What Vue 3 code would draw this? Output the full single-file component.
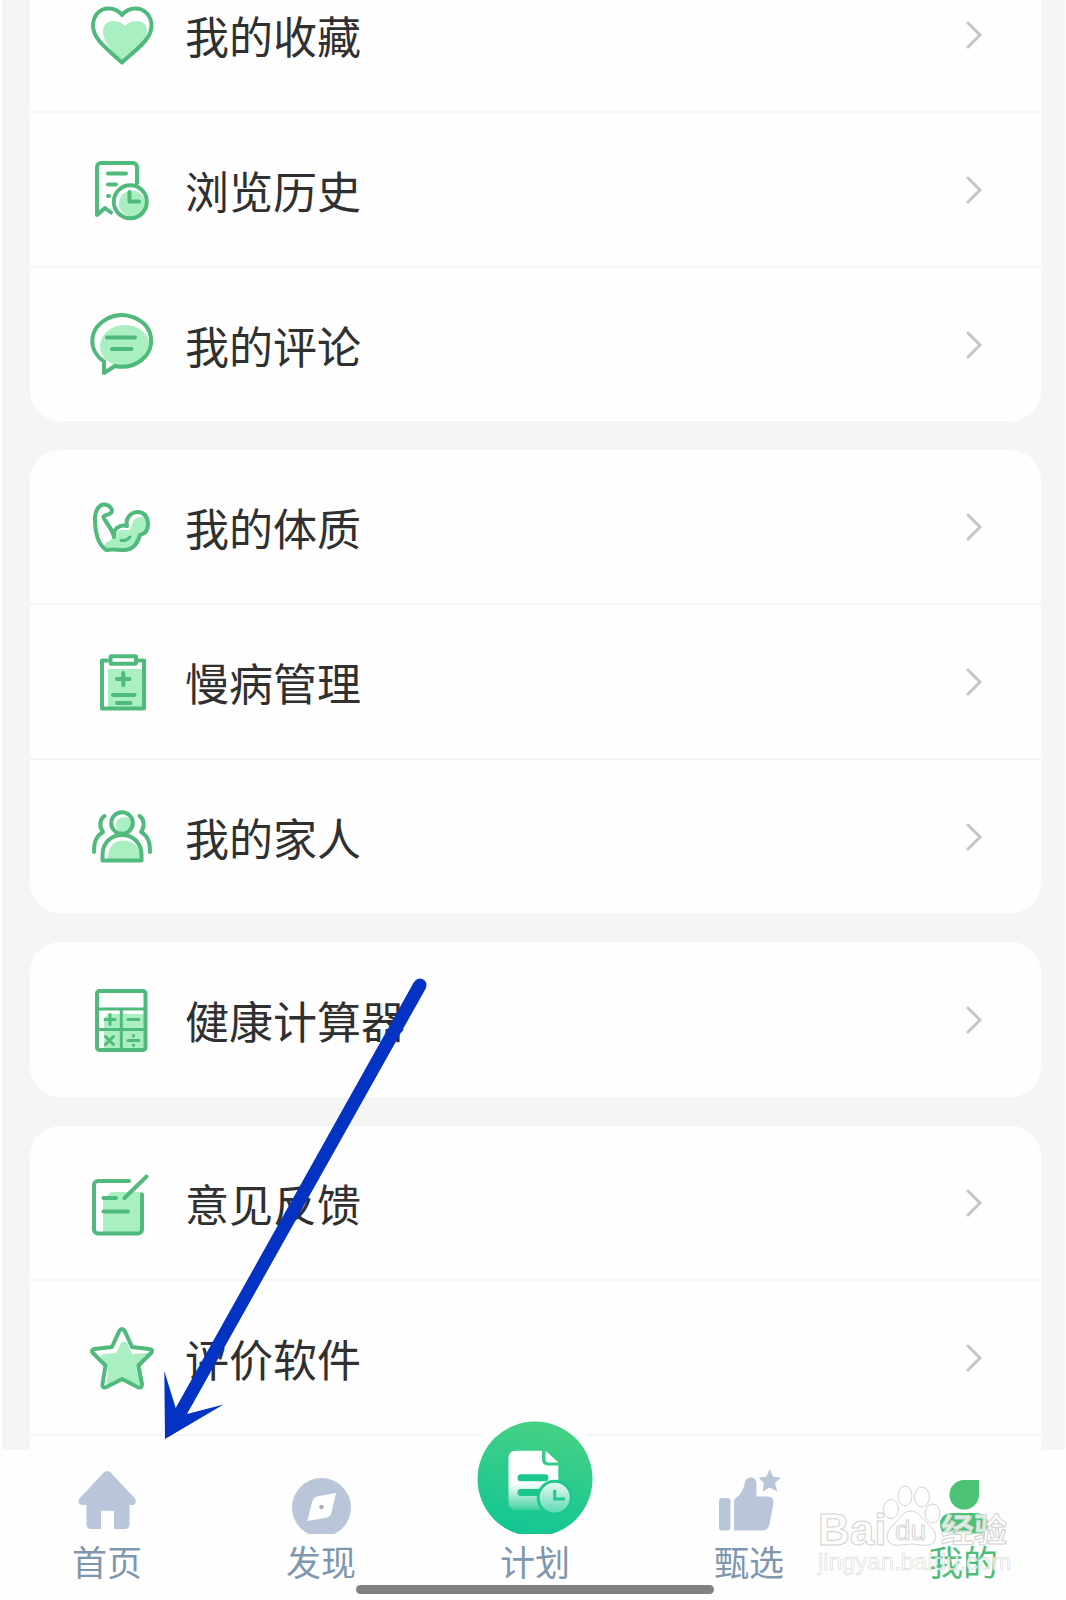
<template>
  <div class="page">
    <main class="menu">
      <section
        v-for="(group, index) in groups"
        :key="index"
        :class="['card', { 'card--open': index === groups.length - 1 }]"
      >
        <a v-for="item in group" :key="item.icon" class="row" href="#">
          <svg class="row__icon" viewBox="0 0 72 72" aria-hidden="true">
            <template v-if="item.icon === 'heart'">
              <path class="tint" d="M39 27C35 23 31 22 27 22C20 22 17 27 17 33C17 43 26 52 36 62C47 52 61 43 61 32C61 26 57 22 51 22C47 22 43 23 39 27Z" />
              <path class="line" d="M36 16C32 11 27 9.5 22.5 9.5C13 9.5 7 17 7 27C7 41 24 52 36 63.5C48 52 65.5 41 65.5 27C65.5 17 59 9.5 49.5 9.5C45 9.5 40 11 36 16Z" />
            </template>
            <template v-else-if="item.icon === 'history'">
              <path class="line" d="M51 29V13a4 4 0 0 0-4-4H15a4 4 0 0 0-4 4V61L19 54L25 58.5" />
              <path class="line" d="M22 19.5H40M22 30.5H30M22 42H23" />
              <circle class="tint" cx="46" cy="49.5" r="13" />
              <circle class="line" cx="44.3" cy="47.8" r="16.5" />
              <path class="line" d="M43.5 38V47.5H53" />
            </template>
            <template v-else-if="item.icon === 'comment'">
              <ellipse class="tint" cx="39" cy="37" rx="25" ry="21" />
              <path class="line" d="M18 52.5A29.5 25.7 0 1 1 29 57L18 64Z" />
              <path class="line" d="M21 28.5H49M26 40H45.5" />
            </template>
            <template v-else-if="item.icon === 'body'">
              <path class="tint" d="M18 58C17 50 27 50 30 43C33 38 38 39 43 39C48 35 45 27 54 26C60 24 63 30 62 35C61 41 58 42 54 43C52 52 47 58 38 58Z" />
              <path class="line" d="M20 59C12 53 9 42 9 28C9 18 14 13.5 18 13.5C23 13.5 27 18 25.5 21C24 24.5 20 23 17.5 25.5C17 29 26 36 28 46C27 38 33 33 41 35C39 27 45 21 52 21C58 21 62 26 62 33C62 40 59 43 54 44C51 53 47 59 38 59C31 59 27 58 20 59Z" />
              <path class="line line--thin" d="M35 49.5Q41 50 44 46" />
            </template>
            <template v-else-if="item.icon === 'clipboard'">
              <path class="tint" d="M22 23H58V62H22Z" />
              <path class="line" d="M21 14.5H16V62.5H58V14.5H53" />
              <rect class="line" x="24.5" y="10.3" width="25.5" height="7.5" rx="1" />
              <path class="line" d="M37.3 27V39M31 33H43.5M27 49H48.5M31 57H44.5" />
            </template>
            <template v-else-if="item.icon === 'family'">
              <circle class="tint" cx="38" cy="24" r="8" />
              <path class="tint" d="M22 59V55C22 46 28 39.5 37 39.5C47 39.5 54 46 54 55V59Z" />
              <circle class="line" cx="36" cy="22" r="10.8" />
              <path class="line" d="M16.5 59.5V54C16.5 42 25 34 36 34S55.5 42 55.5 54V59.5Z" />
              <path class="line" d="M18.5 15C13.5 18 13 26 17 31C10 35 8 41 8 51M53.5 15C58.5 18 59 26 55 31C62 35 64 41 64 51" />
            </template>
            <template v-else-if="item.icon === 'calculator'">
              <path class="tint" d="M18 34L22 30H59V65H18Z" />
              <rect class="line" x="11" y="7" width="48.5" height="59" rx="2.5" />
              <path class="line line--thin" d="M12 25H59M12 45.5H59M35.3 25V66" />
              <path class="line line--thin" d="M24 30.5V40.5M19 35.5H29M42 35.5H53M19.5 52.5L27.5 60.5M27.5 52.5L19.5 60.5M42 56.5H53M47.5 51.5V52M47.5 61V61.5" />
            </template>
            <template v-else-if="item.icon === 'feedback'">
              <path class="tint" d="M17 33L25 25H56V66H17Z" />
              <path class="line" d="M43 14H12a4 4 0 0 0-4 4V62.5a4 4 0 0 0 4 4H52a4 4 0 0 0 4-4V27.5" />
              <path class="line" d="M60.5 9.5L38.5 31M17.5 31H30M17.5 44.5H42" />
            </template>
            <template v-else>
              <path class="tint" d="M35 21Q38 18 41 21L46 32L62 31L52 44L56 65L36 57L20 65L22 46L15 35Q15 32 19 32L30 31Z" />
              <path class="line" d="M33 9.5Q36 4.5 39 9.5L46 25L63.5 27Q68 28 64.5 31.5L52.5 43.5L56 62Q56 67 51.5 65L36 57L20.5 65Q16 67 16.5 62L19.5 43.5L7.5 31.5Q4 28 8.5 27L26 25Z" />
            </template>
          </svg>
          <span class="row__label">{{ item.label }}</span>
          <svg class="row__chevron" viewBox="0 0 18 28" aria-hidden="true">
            <path d="M2 2L14 14L2 26" />
          </svg>
        </a>
      </section>
    </main>

    <nav class="tabs">
      <a
        v-for="tab in tabs"
        :key="tab.icon"
        :class="['tab', { 'tab--active': tab.icon === 'mine' }]"
        href="#"
      >
        <svg v-if="tab.icon === 'plan'" class="tab__plan" viewBox="0 0 116 113" aria-hidden="true">
          <defs>
            <linearGradient id="plan-bg" x1="0.6" y1="0" x2="0.4" y2="1">
              <stop offset="0" stop-color="#46d184" />
              <stop offset="1" stop-color="#12c594" />
            </linearGradient>
            <linearGradient id="plan-doc" x1="0" y1="0" x2="0" y2="1">
              <stop offset="0.55" stop-color="#fff" />
              <stop offset="1" stop-color="#fff" stop-opacity="0.15" />
            </linearGradient>
            <linearGradient id="plan-clock" x1="0" y1="0" x2="0" y2="1">
              <stop offset="0" stop-color="#e9faf3" />
              <stop offset="1" stop-color="#5cd9b3" />
            </linearGradient>
            <clipPath id="plan-clip">
              <rect x="-12" y="-12" width="140" height="125" />
            </clipPath>
          </defs>
          <g clip-path="url(#plan-clip)">
            <circle cx="58" cy="58" r="68" fill="#fefefe" />
            <circle cx="58" cy="58" r="57.5" fill="url(#plan-bg)" />
          </g>
          <path fill="url(#plan-doc)" d="M39 29.7H65V38Q65 44.5 71 44.5H81.3V89H39Q31.5 89 31.5 81.5V37Q31.5 29.7 39 29.7Z" />
          <path fill="#fff" d="M68.5 29.7L81.5 41.5H71.5Q68.5 41.5 68.5 38.5Z" />
          <path stroke="#1cc78f" stroke-width="7" stroke-linecap="round" d="M44 56.7H68M44 71.5H62" />
          <circle cx="77.7" cy="76.7" r="18" fill="#1cc791" />
          <circle cx="77.7" cy="76.7" r="15" fill="url(#plan-clock)" />
          <path fill="none" stroke="#1fc892" stroke-width="3" d="M77.7 69V78H88" />
        </svg>
        <svg v-else class="tab__icon" viewBox="0 0 64 64" aria-hidden="true">
          <path v-if="tab.icon === 'home'" d="M28.8 2.4Q32.3-.6 35.6 2.4L60 28.5Q62.5 34.5 57 35H54.5V54Q54.5 59 50 59H39V40.7H26V59H16Q11.5 59 11.5 54V35H8Q1.5 34.5 4.5 28.5Z" />
          <template v-else-if="tab.icon === 'discover'">
            <circle cx="32.5" cy="37.5" r="29.5" />
            <path fill="#fff" d="M47 23L28 26.5Q24.5 27.5 23.5 30.5L18.3 51L37.5 47.7Q41.5 46.5 42.2 43.5Z" />
            <circle cx="32.5" cy="37" r="2.3" fill="#aeb0b5" />
          </template>
          <template v-else-if="tab.icon === 'select'">
            <rect x="2" y="28" width="11.5" height="32.5" rx="3" />
            <path d="M17 60.5V31Q17 28.5 20 27Q26 23 28 12Q29.5 7 34.5 7.5Q39.5 8 39.5 14V26.5H51Q57.5 27 56.3 34L52.5 54Q51 60.5 46 60.5Z" />
            <path d="M52.7-1L56 6.5L64 7.8L58 13L60.2 21.5L52.7 17.5L45.5 21.5L47 13L41.5 7.8L49.5 6.5Z" />
          </template>
          <template v-else>
            <path d="M48 10V24.5A14.8 14.8 0 1 1 33 10Z" />
            <path d="M20 43H46Q57 44 57 54Q57 63.5 50 63.5H16Q9 63.5 9 54Q9 44 20 43Z" />
          </template>
        </svg>
        <span class="tab__label">{{ tab.label }}</span>
      </a>
    </nav>
    <div class="home-bar"></div>

    <svg class="watermark" viewBox="814 1480 200 100" aria-hidden="true">
      <text class="mark mark--latin" x="816" y="1545">Bai</text>
      <ellipse class="mark" cx="889" cy="1509" rx="7.5" ry="9.5" />
      <ellipse class="mark" cx="903" cy="1496" rx="7" ry="10" />
      <ellipse class="mark" cx="920" cy="1497" rx="7.5" ry="10" />
      <ellipse class="mark" cx="930.5" cy="1513.5" rx="7.5" ry="9.5" />
      <path class="mark" d="M909 1511C917 1511 920 1519 925 1523C933 1530 936 1536 932 1542C927 1548 916 1544 909 1544C902 1544 892 1548 887 1542C883 1536 886 1530 893 1523C898 1519 901 1511 909 1511Z" />
      <text class="mark mark--du" x="893" y="1540">du</text>
      <text class="mark mark--cjk" x="939" y="1542">经验</text>
      <text class="mark mark--url" x="816" y="1570">jingyan.baidu.com</text>
    </svg>

    <svg class="arrow" viewBox="160 974 272 470" aria-hidden="true">
      <circle cx="420" cy="985" r="6.5" />
      <path d="M414 982L175.7 1408L164.3 1371L165 1439L223.5 1404.5L187 1414L426 988Z" />
    </svg>
  </div>
</template>

<script setup>
const groups = [
  [
    { icon: 'heart', label: '我的收藏' },
    { icon: 'history', label: '浏览历史' },
    { icon: 'comment', label: '我的评论' }
  ],
  [
    { icon: 'body', label: '我的体质' },
    { icon: 'clipboard', label: '慢病管理' },
    { icon: 'family', label: '我的家人' }
  ],
  [{ icon: 'calculator', label: '健康计算器' }],
  [
    { icon: 'feedback', label: '意见反馈' },
    { icon: 'star', label: '评价软件' }
  ]
]

const tabs = [
  { icon: 'home', label: '首页' },
  { icon: 'discover', label: '发现' },
  { icon: 'plan', label: '计划' },
  { icon: 'select', label: '甄选' },
  { icon: 'mine', label: '我的' }
]
</script>

<style>
body {
  margin: 0;
  background: #fefefe;
}
</style>

<style scoped>
.page {
  position: relative;
  overflow: hidden;
  background: #fefefe;
  font-family: 'Noto Sans CJK SC', 'Noto Sans', sans-serif;
}

a {
  color: inherit;
  text-decoration: none;
}

/* Menu, scrolled a little past its first row */
.menu {
  display: flex;
  flex-direction: column;
  gap: 29px;
  margin: -42px 1px 0 2px;
  padding: 0 24px 0 28px;
  background: #f5f5f5;
}

.card {
  overflow: hidden;
  border-radius: 30px;
  background: #fefefe;
}

.card--open {
  padding-bottom: 14px;
  border-radius: 30px 30px 0 0;
}

.row {
  display: flex;
  align-items: center;
  box-sizing: border-box;
  height: 155px;
  padding: 0 57px 0 56px;
  border-bottom: 2px solid #f5f5f5;
}

.card:not(.card--open) .row:last-child {
  height: 153px;
  border-bottom: none;
}

.card .row:only-child:last-child {
  height: 155px;
}

.row__icon {
  flex: none;
  width: 72px;
  height: 72px;
}

.row__label {
  flex: 1;
  margin-left: 27px;
  color: #303030;
  font-size: 44px;
  line-height: 60px;
}

.row__chevron {
  width: 18px;
  height: 28px;
  fill: none;
  stroke: #c6c6c6;
  stroke-width: 3;
  stroke-linecap: round;
}

.tint {
  fill: #a9efc1;
}

.line {
  fill: none;
  stroke: #50b97c;
  stroke-width: 4;
  stroke-linecap: round;
  stroke-linejoin: round;
}

.line--thin {
  stroke-width: 3;
}

/* Tab bar */
.tabs {
  display: grid;
  grid-template-columns: repeat(5, 1fr);
  grid-template-rows: 100%;
  height: 150px;
  margin-right: -4px;
}

.tab {
  display: flex;
  flex-direction: column;
  align-items: center;
  justify-content: flex-end;
  color: #7e97ae;
}

.tab--active {
  color: #4dbe75;
}

.tab__icon {
  flex: none;
  width: 64px;
  height: 64px;
  overflow: hidden;
  fill: #b9c5d9;
}

.tab--active .tab__icon {
  fill: #4bc274;
}

.tab__plan {
  flex: none;
  width: 116px;
  height: 113px;
  overflow: visible;
}

.tab__label {
  margin-bottom: 12px;
  font-size: 35px;
  line-height: 54px;
}

/* Overlays */
.home-bar {
  position: absolute;
  right: 0;
  bottom: 6px;
  left: 4px;
  width: 358px;
  height: 9px;
  margin: 0 auto;
  border-radius: 5px;
  background: #808080;
}

.watermark {
  position: absolute;
  right: 50px;
  bottom: 20px;
  width: 200px;
  height: 100px;
}

.mark {
  fill: #fff;
  fill-opacity: 0.8;
  stroke: #d2d2d2;
  stroke-width: 1;
}

.mark--latin {
  font: bold 44px 'Liberation Sans', sans-serif;
}

.mark--du {
  font: 28px 'Liberation Sans', sans-serif;
}

.mark--cjk {
  font: bold 33px 'Noto Sans CJK SC', sans-serif;
}

.mark--url {
  font: 24px 'Liberation Sans', sans-serif;
  stroke-width: 0.5;
}

.arrow {
  position: absolute;
  top: 974px;
  left: 160px;
  width: 272px;
  height: 470px;
  fill: #0433c4;
}
</style>
